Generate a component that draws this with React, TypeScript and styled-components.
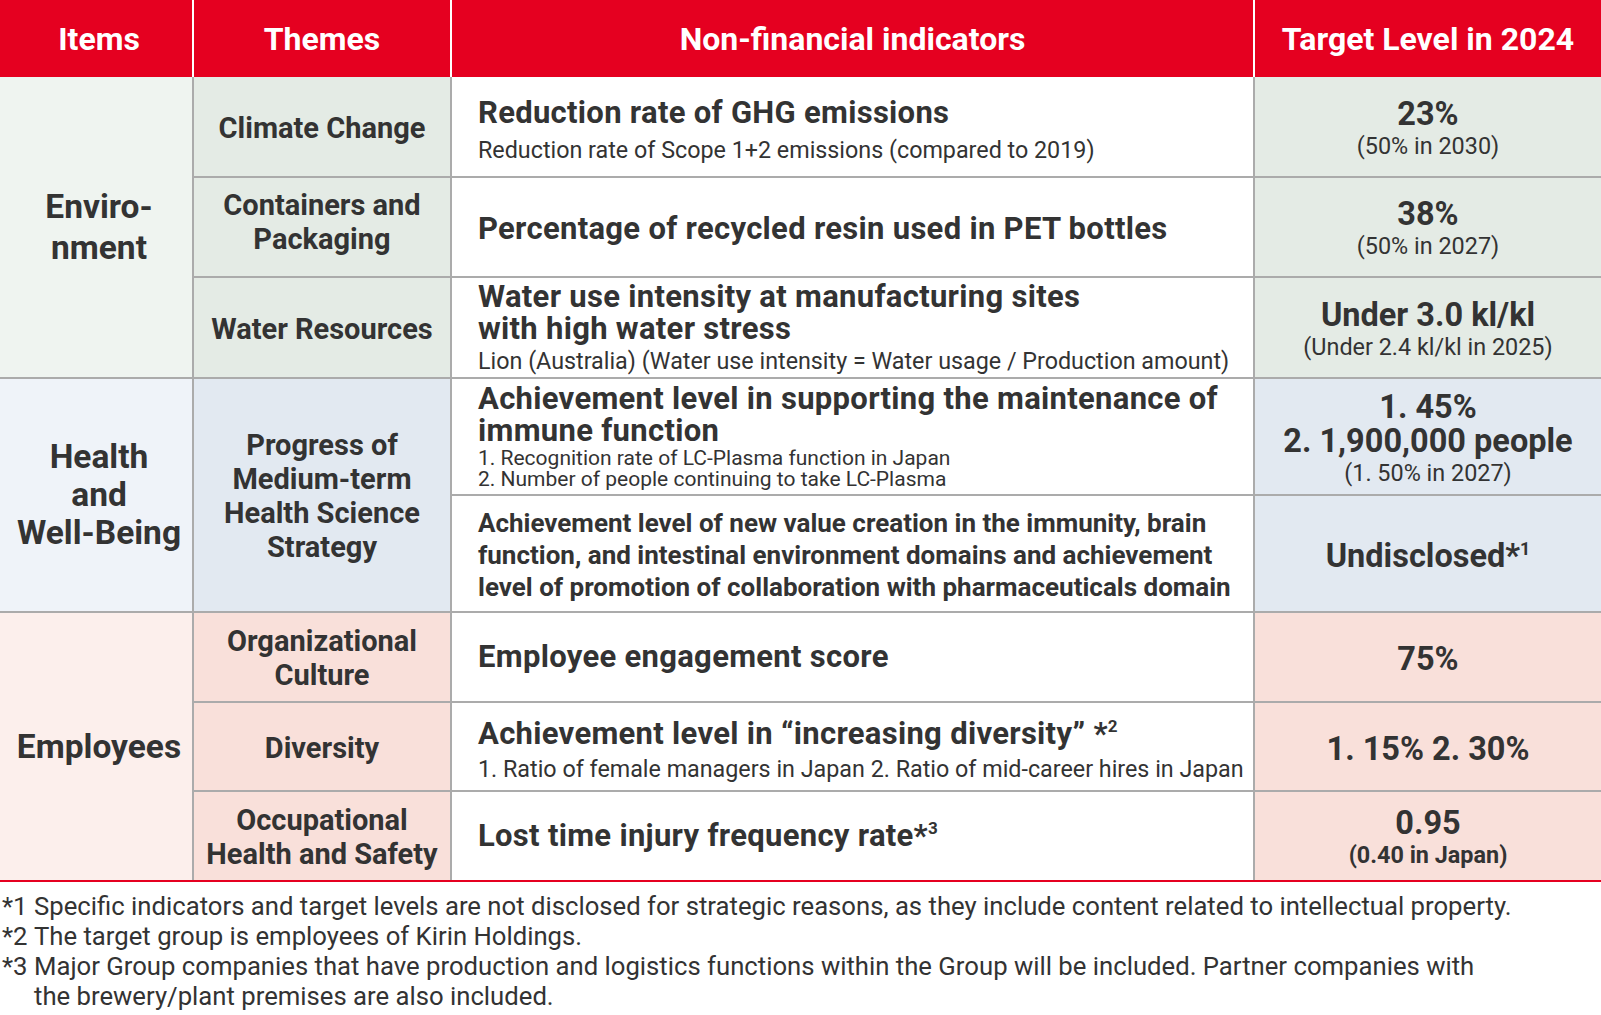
import React from "react";
import styled, { createGlobalStyle, css } from "styled-components";

const GlobalStyle = createGlobalStyle`
  html, body { margin: 0; padding: 0; background: #ffffff; }
  body { font-family: Roboto, "Liberation Sans", Arial, sans-serif; color: #333333; }
`;

type Tone = "env" | "health" | "emp";

const tones: Record<Tone, { item: string; theme: string }> = {
  env: { item: "#eff4f0", theme: "#e4ebe5" },
  health: { item: "#eff3f9", theme: "#e2e9f1" },
  emp: { item: "#fcefec", theme: "#f9e0da" },
};

const RED = "#e50020";
const LINE = "#ababab";

const Page = styled.div`
  width: 1601px;
`;

const Table = styled.div`
  display: grid;
  grid-template-columns: 194px 258px 803px 346px;
  grid-template-rows: 77px 101px 100px 101px 117px 117px 90px 89px 88px;
  border-bottom: 2px solid ${RED};
`;

const HeadCell = styled.div<{ $last?: boolean; $first?: boolean }>`
  box-sizing: border-box;
  background: ${RED};
  color: #ffffff;
  font-weight: 700;
  font-size: 32px;
  display: flex;
  align-items: center;
  justify-content: center;
  padding-top: 1px;
  padding-left: ${(p) => (p.$first ? 6 : 0)}px;
  border-right: ${(p) => (p.$last ? "none" : "2px solid #ffffff")};
`;

const bodyCell = css<{ $last?: boolean; $end?: boolean }>`
  box-sizing: border-box;
  border-bottom: ${(p) => (p.$last ? "none" : `2px solid ${LINE}`)};
  border-right: ${(p) => (p.$end ? "none" : `2px solid ${LINE}`)};
`;

const ItemCell = styled.div<{ $tone: Tone; $span: number; $last?: boolean; $end?: boolean; $lh?: number }>`
  ${bodyCell};
  grid-row: span ${(p) => p.$span};
  background: ${(p) => tones[p.$tone].item};
  display: flex;
  align-items: center;
  justify-content: center;
  text-align: center;
  font-weight: 700;
  font-size: 33.5px;
  line-height: ${(p) => p.$lh ?? 38}px;
  padding-left: 6px;
`;

const ThemeCell = styled.div<{ $tone: Tone; $span?: number; $last?: boolean; $end?: boolean; $lift?: number }>`
  ${bodyCell};
  grid-row: span ${(p) => p.$span ?? 1};
  background: ${(p) => tones[p.$tone].theme};
  display: flex;
  align-items: center;
  justify-content: center;
  text-align: center;
  font-weight: 700;
  font-size: 29px;
  line-height: 34px;
  padding: ${(p) => (p.$lift ? `0 6px ${p.$lift}px` : "2px 6px 0")};
`;

const IndicatorCell = styled.div<{ $last?: boolean; $end?: boolean; $pt?: number }>`
  ${bodyCell};
  background: #ffffff;
  display: flex;
  flex-direction: column;
  justify-content: center;
  padding: ${(p) => p.$pt ?? 3}px 0 0 26px;
`;

const IndTitle = styled.div`
  font-weight: 700;
  font-size: 31px;
  letter-spacing: 0.3px;
  line-height: 32px;
`;

const IndSub = styled.div<{ $small?: boolean; $gap?: number }>`
  font-weight: 400;
  font-size: ${(p) => (p.$small ? 21 : 23.3)}px;
  line-height: ${(p) => (p.$small ? 21 : 32)}px;
  margin-top: ${(p) => p.$gap ?? (p.$small ? 1 : 5)}px;
`;

const IndParagraph = styled.div`
  font-weight: 700;
  font-size: 26px;
  line-height: 32px;
`;

const TargetCell = styled.div<{ $tone: Tone; $last?: boolean; $end?: boolean }>`
  ${bodyCell};
  background: ${(p) => tones[p.$tone].theme};
  display: flex;
  flex-direction: column;
  align-items: center;
  justify-content: center;
  text-align: center;
  padding-top: 4px;
`;

const TargetMain = styled.div`
  font-weight: 700;
  font-size: 32.5px;
  line-height: 34px;
`;

const TargetSub = styled.div<{ $bold?: boolean }>`
  font-weight: ${(p) => (p.$bold ? 700 : 400)};
  font-size: 23.4px;
  line-height: 30px;
`;

const Sup = styled.sup`
  font-size: 0.55em;
  vertical-align: 0.7em;
  line-height: 0;
`;

const Notes = styled.div`
  padding: 9px 0 0 2px;
  font-size: 25.7px;
  line-height: 30px;
  font-weight: 400;
  color: #333333;
`;

const Note = styled.div`
  display: flex;
`;

const NoteMark = styled.span`
  flex: 0 0 auto;
  width: 32px;
`;

const NoteText = styled.span`
  flex: 1 1 auto;
`;

export default function App() {
  return (
    <Page>
      <GlobalStyle />
      <Table>
        <HeadCell $first>Items</HeadCell>
        <HeadCell>Themes</HeadCell>
        <HeadCell>Non-financial indicators</HeadCell>
        <HeadCell $last>Target Level in 2024</HeadCell>

        <ItemCell $tone="env" $span={3} $lh={41}>
          Enviro-
          <br />
          nment
        </ItemCell>
        <ThemeCell $tone="env">Climate Change</ThemeCell>
        <IndicatorCell $pt={9}>
          <IndTitle>Reduction rate of GHG emissions</IndTitle>
          <IndSub>Reduction rate of Scope 1+2 emissions (compared to 2019)</IndSub>
        </IndicatorCell>
        <TargetCell $tone="env" $end>
          <TargetMain>23%</TargetMain>
          <TargetSub>(50% in 2030)</TargetSub>
        </TargetCell>

        <ThemeCell $tone="env" $lift={10}>
          Containers and
          <br />
          Packaging
        </ThemeCell>
        <IndicatorCell>
          <IndTitle>Percentage of recycled resin used in PET bottles</IndTitle>
        </IndicatorCell>
        <TargetCell $tone="env" $end>
          <TargetMain>38%</TargetMain>
          <TargetSub>(50% in 2027)</TargetSub>
        </TargetCell>

        <ThemeCell $tone="env">Water Resources</ThemeCell>
        <IndicatorCell>
          <IndTitle>
            Water use intensity at manufacturing sites
            <br />
            with high water stress
          </IndTitle>
          <IndSub $gap={0}>
            Lion (Australia) (Water use intensity = Water usage / Production amount)
          </IndSub>
        </IndicatorCell>
        <TargetCell $tone="env" $end>
          <TargetMain>Under 3.0 kl/kl</TargetMain>
          <TargetSub>(Under 2.4 kl/kl in 2025)</TargetSub>
        </TargetCell>

        <ItemCell $tone="health" $span={2}>
          Health
          <br />
          and
          <br />
          Well-Being
        </ItemCell>
        <ThemeCell $tone="health" $span={2}>
          Progress of
          <br />
          Medium-term
          <br />
          Health Science
          <br />
          Strategy
        </ThemeCell>
        <IndicatorCell $pt={0}>
          <IndTitle>
            Achievement level in supporting the maintenance of
            <br />
            immune function
          </IndTitle>
          <IndSub $small>
            1. Recognition rate of LC-Plasma function in Japan
            <br />
            2. Number of people continuing to take LC-Plasma
          </IndSub>
        </IndicatorCell>
        <TargetCell $tone="health" $end>
          <TargetMain>1. 45%</TargetMain>
          <TargetMain>2. 1,900,000 people</TargetMain>
          <TargetSub>(1. 50% in 2027)</TargetSub>
        </TargetCell>

        <IndicatorCell>
          <IndParagraph>
            Achievement level of new value creation in the immunity, brain
            <br />
            function, and intestinal environment domains and achievement
            <br />
            level of promotion of collaboration with pharmaceuticals domain
          </IndParagraph>
        </IndicatorCell>
        <TargetCell $tone="health" $end>
          <TargetMain>
            Undisclosed*<Sup>1</Sup>
          </TargetMain>
        </TargetCell>

        <ItemCell $tone="emp" $span={3} $last>
          Employees
        </ItemCell>
        <ThemeCell $tone="emp">
          Organizational
          <br />
          Culture
        </ThemeCell>
        <IndicatorCell $pt={0}>
          <IndTitle>Employee engagement score</IndTitle>
        </IndicatorCell>
        <TargetCell $tone="emp" $end>
          <TargetMain>75%</TargetMain>
        </TargetCell>

        <ThemeCell $tone="emp">Diversity</ThemeCell>
        <IndicatorCell $pt={9}>
          <IndTitle>
            Achievement level in “increasing diversity” *<Sup>2</Sup>
          </IndTitle>
          <IndSub $gap={3}>1. Ratio of female managers in Japan 2. Ratio of mid-career hires in Japan</IndSub>
        </IndicatorCell>
        <TargetCell $tone="emp" $end>
          <TargetMain>1. 15% 2. 30%</TargetMain>
        </TargetCell>

        <ThemeCell $tone="emp" $last>
          Occupational
          <br />
          Health and Safety
        </ThemeCell>
        <IndicatorCell $last $pt={0}>
          <IndTitle>
            Lost time injury frequency rate*<Sup>3</Sup>
          </IndTitle>
        </IndicatorCell>
        <TargetCell $tone="emp" $last $end>
          <TargetMain>0.95</TargetMain>
          <TargetSub $bold>(0.40 in Japan)</TargetSub>
        </TargetCell>
      </Table>

      <Notes>
        <Note>
          <NoteMark>*1</NoteMark>
          <NoteText>
            Specific indicators and target levels are not disclosed for strategic reasons, as they include
            content related to intellectual property.
          </NoteText>
        </Note>
        <Note>
          <NoteMark>*2</NoteMark>
          <NoteText>The target group is employees of Kirin Holdings.</NoteText>
        </Note>
        <Note>
          <NoteMark>*3</NoteMark>
          <NoteText>
            Major Group companies that have production and logistics functions within the Group will be
            included. Partner companies with
            <br />
            the brewery/plant premises are also included.
          </NoteText>
        </Note>
      </Notes>
    </Page>
  );
}
